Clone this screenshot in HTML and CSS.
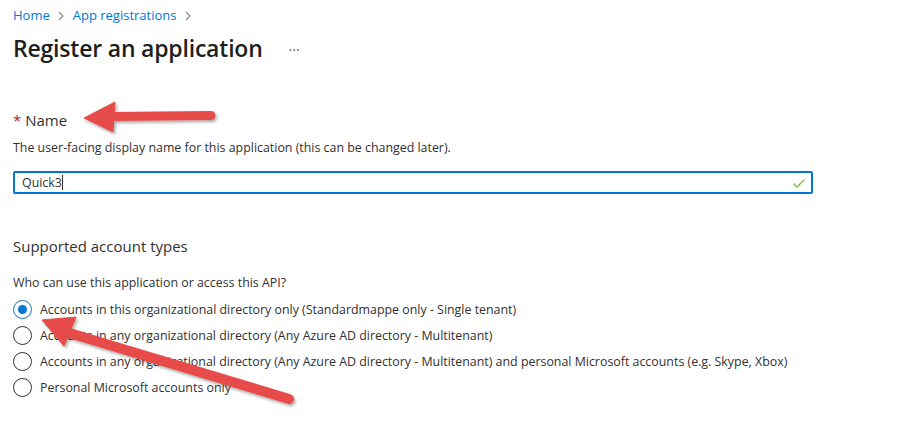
FILE: index.html
```html
<!DOCTYPE html>
<html lang="en">
<head>
<meta charset="utf-8">
<title>Register an application</title>
<link rel="stylesheet" href="styles.css">
</head>
<body>
<div class="page">
  <nav class="breadcrumb">
    <a class="crumb">Home</a>
    <span class="sep"><svg width="8" height="10" viewBox="0 0 8 10"><path d="M2 1l4 4-4 4" fill="none" stroke="#8a8886" stroke-width="1.1"/></svg></span>
    <a class="crumb">App registrations</a>
    <span class="sep"><svg width="8" height="10" viewBox="0 0 8 10"><path d="M2 1l4 4-4 4" fill="none" stroke="#8a8886" stroke-width="1.1"/></svg></span>
  </nav>
  <header class="title-row">
    <h1 class="title">Register an application</h1>
    <span class="more">···</span>
  </header>

  <section class="field">
    <div class="label"><span class="req">*</span> Name</div>
    <p class="desc">The user-facing display name for this application (this can be changed later).</p>
    <div class="input">
      <span class="value">Quick3</span><span class="caret"></span>
      <svg class="check" width="14" height="12" viewBox="0 0 14 12"><path d="M1.5 6.5l3.5 3.5 7.5-7.5" fill="none" stroke="#7fba4a" stroke-width="1.4"/></svg>
    </div>
  </section>

  <section class="accounts">
    <h2 class="subhead">Supported account types</h2>
    <p class="desc q">Who can use this application or access this API?</p>
    <ul class="radios">
      <li class="radio checked"><span class="dot"></span>Accounts in this organizational directory only (Standardmappe only - Single tenant)</li>
      <li class="radio"><span class="dot"></span>Accounts in any organizational directory (Any Azure AD directory - Multitenant)</li>
      <li class="radio"><span class="dot"></span>Accounts in any organizational directory (Any Azure AD directory - Multitenant) and personal Microsoft accounts (e.g. Skype, Xbox)</li>
      <li class="radio"><span class="dot"></span>Personal Microsoft accounts only</li>
    </ul>
  </section>
</div>

<svg class="arrows" width="902" height="422" viewBox="0 0 902 422">
  <defs>
    <filter id="sh" x="-20%" y="-50%" width="140%" height="200%">
      <feDropShadow dx="1.5" dy="2" stdDeviation="1.5" flood-color="#000" flood-opacity="0.35"/>
    </filter>
  </defs>
  <g filter="url(#sh)" fill="#e64c48" stroke="#e64c48">
    <line x1="110" y1="116.5" x2="211" y2="115.5" stroke-width="9" stroke-linecap="round"/>
    <polygon points="84,118 115,102 113,132" stroke-width="1" stroke-linejoin="round"/>
    <line x1="66" y1="332" x2="289" y2="399" stroke-width="10" stroke-linecap="round"/>
    <polygon points="42,320 76,317 64,346" stroke-width="1" stroke-linejoin="round"/>
  </g>
</svg>
</body>
</html>
```
FILE: styles.css
```css
* { box-sizing: border-box; }
html, body { margin: 0; padding: 0; background: #fff; }
body {
  font-family: "Open Sans", "Noto Sans", "Liberation Sans", sans-serif;
  color: #323130;
  width: 902px;
  height: 422px;
  overflow: hidden;
  position: relative;
}
.page { padding: 0 13px; }

.breadcrumb {
  display: flex;
  align-items: center;
  height: 29px;
  padding-top: 1px;
  font-size: 13px;
}
.crumb { color: #0078d4; text-decoration: none; }
.sep { display: inline-flex; width: 23px; justify-content: center; padding-top: 2px; }

.title-row {
  display: flex;
  align-items: center;
  height: 38px;
}
.title {
  margin: 0;
  font-size: 23px;
  font-weight: 600;
  color: #201f1e;
  letter-spacing: -0.2px;
}
.more {
  margin-left: 26px;
  font-size: 14px;
  color: #605e5c;
  padding-top: 2px;
}

.field { margin-top: 42px; }
.label {
  font-size: 15px;
  height: 22px;
  line-height: 22px;
  color: #323130;
}
.req { color: #a4262c; }
.desc {
  margin: 0;
  font-size: 12.4px;
  line-height: 18px;
  color: #323130;
}
.field .desc { margin-top: 8px; }

.input {
  margin-top: 14px;
  width: 800px;
  height: 23px;
  border: 2px solid #0078d4;
  border-radius: 2px;
  display: flex;
  align-items: center;
  padding-left: 7px;
  font-size: 12.4px;
}
.value { color: #323130; }
.caret { width: 1px; height: 15px; background: #323130; }
.check { margin-left: auto; margin-right: 5px; }

.accounts { margin-top: 41px; }
.subhead {
  margin: 0;
  font-size: 15px;
  font-weight: 400;
  line-height: 22px;
  color: #323130;
}
.q { margin-top: 17px; }

.radios {
  list-style: none;
  margin: 4px 0 0;
  padding: 0;
}
.radio {
  display: flex;
  align-items: center;
  height: 26px;
  font-size: 12.4px;
  color: #323130;
}
.dot {
  width: 19px;
  height: 19px;
  border: 1px solid #323130;
  border-radius: 50%;
  margin-right: 8px;
  flex: none;
  display: flex;
  align-items: center;
  justify-content: center;
}
.radio.checked .dot { border-color: #0078d4; }
.radio.checked .dot::after {
  content: "";
  width: 9px;
  height: 9px;
  border-radius: 50%;
  background: #0078d4;
}

.arrows { position: absolute; left: 0; top: 0; pointer-events: none; }
```
